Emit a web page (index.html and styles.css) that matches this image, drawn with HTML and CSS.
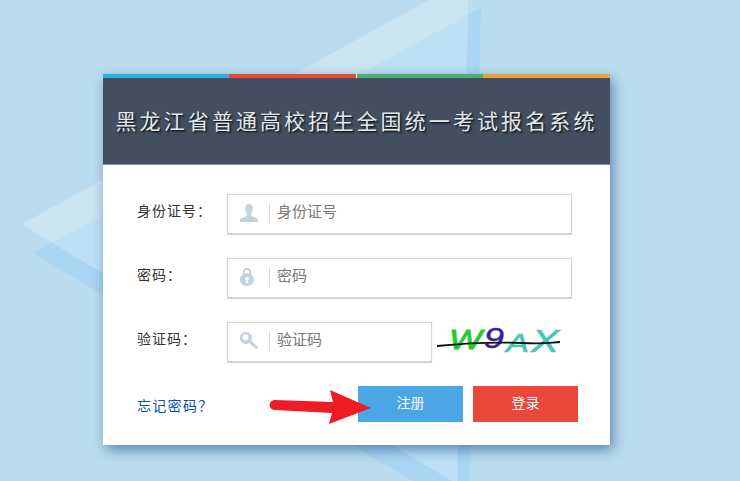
FILE: index.html
```html
<!DOCTYPE html>
<html lang="zh-CN">
	<head>
		<meta charset="utf-8">
		<title>黑龙江省普通高校招生全国统一考试报名系统</title>
		<link rel="stylesheet" href="styles.css">
	</head>
	<body>

		<!-- background logo shape -->
		<svg class="bg-shape" width="740" height="481" viewBox="0 0 740 481">
			<polygon class="inner" points="481,8 52,243 452,481 470,481"/>
			<polygon class="band" points="481,8 468,15 457,481 470,481"/>
			<polygon class="band" points="52,243 33,253 413,481 452,481"/>
			<polygon class="light" points="429,0 468,0 468,15 52,243 22,224"/>
		</svg>

		<div class="card">
			<div class="stripes">
				<span class="stripe s-blue"></span>
				<span class="stripe s-red"></span>
				<span class="stripe s-green"></span>
				<span class="stripe s-orange"></span>
			</div>

			<div class="head">
				<h1>黑龙江省普通高校招生全国统一考试报名系统</h1>
			</div>

			<form class="form">
				<div class="row">
					<label class="label">身份证号：</label>
					<div class="field">
						<svg class="icon" width="18" height="18" viewBox="0 0 18 18">
							<path d="M9 0c2.600 0 3.900 2 3.900 4.600 0 2.200-.9 4-1.900 5v1.500c0 1 1.300 1.500 3 2.100 2 .7 4 1.300 4 2.600V18H0v-2.200c0-1.300 2-1.900 4-2.600 1.700-.6 3-1.100 3-2.100V9.600c-1-1-1.900-2.800-1.900-5C5.100 2 6.400 0 9 0z"/>
						</svg>
						<input class="input" type="text" placeholder="身份证号">
					</div>
				</div>

				<div class="row">
					<label class="label">密码：</label>
					<div class="field">
						<svg class="icon" width="18" height="18" viewBox="0 0 18 18">
							<path fill-rule="evenodd" d="M7 0c2.700 0 4.300 1.900 4.300 4.300v2.300c1.600 1.200 2.700 3 2.700 5.200 0 3.500-3 6.200-7 6.200s-7-2.700-7-6.200c0-2.200 1.100-4 2.700-5.200V4.300C2.700 1.900 4.300 0 7 0zm0 2C5.600 2 4.700 3 4.700 4.400v1.200C5.400 5.400 6.200 5.300 7 5.300s1.600.1 2.300.3V4.400C9.300 3 8.400 2 7 2zm0 7c-1.100 0-1.900.8-1.900 1.800 0 .7.400 1.300 1 1.600V15h1.800v-2.600c.6-.3 1-.9 1-1.600C8.900 9.800 8.100 9 7 9z"/>
						</svg>
						<input class="input" type="text" placeholder="密码">
					</div>
				</div>

				<div class="row">
					<label class="label">验证码：</label>
					<div class="field field-short">
						<svg class="icon" width="18" height="18" viewBox="0 0 18 18">
							<path fill-rule="evenodd" d="M6 0a6 6 0 0 1 5.300 8.800l6.200 5.600c.6.600.6 1.500.1 2.100-.5.600-1.500.7-2.100.1L9.200 11A6 6 0 1 1 6 0zm-.5 2.300a3 3 0 1 0 0 6 3 3 0 0 0 0-6z"/>
						</svg>
						<input class="input" type="text" placeholder="验证码">
					</div>
					<svg class="captcha" width="126" height="36" viewBox="0 0 126 36">
						<text class="c-w" x="12" y="27" textLength="33" lengthAdjust="spacingAndGlyphs">W</text>
						<text class="c-9" x="47" y="26" textLength="20" lengthAdjust="spacingAndGlyphs">9</text>
						<text class="c-a" x="69" y="30" textLength="23" lengthAdjust="spacingAndGlyphs">A</text>
						<text class="c-x" x="94" y="30" textLength="28" lengthAdjust="spacingAndGlyphs">X</text>
						<path class="c-line" d="M0 24 C30 21 60 20 85 21 S110 21 123 20"/>
					</svg>
				</div>

				<div class="row row-actions">
					<a class="forgot" href="#">忘记密码？</a>
					<div class="btns">
						<button class="btn btn-blue" type="button">注册</button>
						<button class="btn btn-red" type="button">登录</button>
					</div>
				</div>
			</form>
		</div>

		<!-- arrow lies on top of the card -->
		<svg class="arrow" width="104" height="36" viewBox="0 0 104 36">
			<path d="M6 10 L64 12 L61 0 L102 18 L60 34 L63 23 L6 20 C-1 20 -1 10 6 10 Z"/>
		</svg>

	</body>
</html>
```

FILE: styles.css
```css
html, body {
	margin: 0;
	height: 100%;
	overflow: hidden;
}

body {
	background-color: #bbdcee;
	font-family: "Liberation Sans", "Noto Sans CJK SC", sans-serif;
	font-size: 14px;
	color: #333;
	position: relative;
}

.bg-shape {
	position: absolute;
	left: 0;
	top: 0;
}

.bg-shape .inner { fill: #bde0f5; }
.bg-shape .band { fill: #a9d6f2; }
.bg-shape .light { fill: #cbe4f1; }

.card {
	position: relative;
	width: 507px;
	margin: 74px 0 0 103px;
	background: #fff;
	box-shadow: 3px 5px 12px rgba(40, 90, 140, .65);
}

.stripes {
	display: flex;
	height: 4px;
}

.stripe {
	flex: 1;
	box-sizing: border-box;
}

.s-blue { background: #2fb0da; flex: 0 0 126px; }
.s-red { background: #e8483c; border-right: 1px solid #fff; }
.s-green { background: #4bb077; }
.s-orange { background: #eca23f; }

.head {
	height: 86px;
	background: #434f61;
	border-bottom: 1px solid #8a919c;
	display: flex;
	align-items: center;
	justify-content: center;
}

.head h1 {
	margin: 0 0 2px;
	font-size: 21px;
	font-weight: normal;
	letter-spacing: 3.100px;
	white-space: nowrap;
	color: #e2e8ec;
	text-shadow: 1px 1px 1px #15191f, 2px 2px 2px rgba(20, 25, 31, .5);
}

.form {
	padding: 29px 32px 23px 34px;
	display: flex;
	flex-direction: column;
	gap: 23px;
}

.row {
	display: flex;
	align-items: center;
}

.label {
	width: 90px;
	flex: none;
	letter-spacing: 1px;
	margin-bottom: 10px;
}

.field {
	box-sizing: border-box;
	width: 345px;
	height: 41px;
	border: 1px solid #d4d4d4;
	border-bottom-width: 2px;
	box-shadow: 0 0 1px #d8d8d8;
	display: flex;
	align-items: center;
	padding: 0 0 3px 12px;
}

.field-short { width: 205px; }

.icon {
	flex: none;
	fill: #c3d2de;
}

.input {
	flex: 1;
	min-width: 0;
	margin-left: 11px;
	padding: 0 0 2px 7px;
	height: 18px;
	box-sizing: content-box;
	border: 0;
	border-left: 1px solid #ddd;
	outline: 0;
	background: none;
	font: inherit;
	font-size: 15px;
	line-height: 16px;
}

.input::placeholder {
	color: #777;
	opacity: 1;
}

.captcha {
	flex: none;
	margin-left: 5px;
	margin-bottom: 5px;
	overflow: visible;
}

.captcha text {
	font-family: "Liberation Sans", sans-serif;
	font-style: italic;
}

.captcha .c-w { fill: #22cc2e; font-size: 27px; stroke: #22cc2e; stroke-width: .8px; }
.captcha .c-9 { fill: #3a1f9c; font-size: 29px; stroke: #3a1f9c; stroke-width: .5px; }
.captcha .c-a { fill: #45c9b0; font-size: 25px; stroke: #45c9b0; stroke-width: .5px; }
.captcha .c-x { fill: #45c9b0; font-size: 31px; stroke: #45c9b0; stroke-width: .5px; }
.c-line { fill: none; stroke: #111; stroke-width: 1.800; }

.row-actions { justify-content: space-between; }

.forgot {
	color: #0a4fb5;
	text-decoration: none;
	letter-spacing: 1.300px;
	margin-top: 1px;
}

.btns {
	display: flex;
	gap: 10px;
}

.btn {
	width: 105px;
	height: 36px;
	border: 0;
	padding: 0 0 4px;
	color: #fff;
	font: inherit;
}

.btn-blue { background: #4aa6e5; }
.btn-red { background: #e8473a; }

.arrow {
	position: absolute;
	left: 269px;
	top: 390px;
	fill: #ee1c25;
}
```
